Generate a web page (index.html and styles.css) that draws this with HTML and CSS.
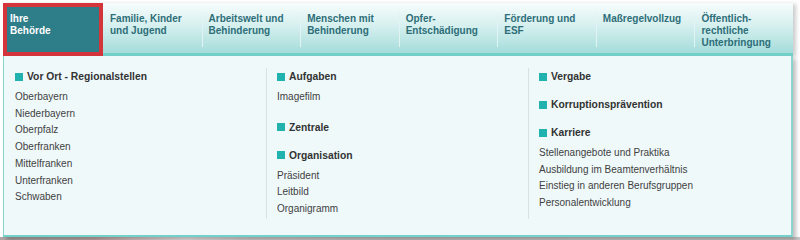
FILE: index.html
```html
<!DOCTYPE html>
<html lang="de">
<head>
    <meta charset="UTF-8">
    <meta name="viewport" content="width=device-width, initial-scale=1.0">
    <title>Ihre Behörde</title>
    <link rel="stylesheet" href="styles.css">
</head>
<body>

    <div class="menu">
        <nav class="topnav">
            <a class="nav-item active" href="#"><span class="nav-link">Ihre<br>Behörde</span></a>
            <a class="nav-item" href="#"><span class="nav-link">Familie, Kinder<br>und Jugend</span></a>
            <a class="nav-item" href="#"><span class="nav-link">Arbeitswelt und<br>Behinderung</span></a>
            <a class="nav-item" href="#"><span class="nav-link">Menschen mit<br>Behinderung</span></a>
            <a class="nav-item" href="#"><span class="nav-link">Opfer-<br>Entschädigung</span></a>
            <a class="nav-item" href="#"><span class="nav-link">Förderung und<br>ESF</span></a>
            <a class="nav-item" href="#"><span class="nav-link">Maßregelvollzug</span></a>
            <a class="nav-item" href="#"><span class="nav-link">Öffentlich-<br>rechtliche<br>Unterbringung</span></a>
        </nav>

        <div class="dropdown">
            <div class="column">
                <div class="group">
                    <h3 class="group-title">Vor Ort - Regionalstellen</h3>
                    <ul class="links">
                        <li><a href="#">Oberbayern</a></li>
                        <li><a href="#">Niederbayern</a></li>
                        <li><a href="#">Oberpfalz</a></li>
                        <li><a href="#">Oberfranken</a></li>
                        <li><a href="#">Mittelfranken</a></li>
                        <li><a href="#">Unterfranken</a></li>
                        <li><a href="#">Schwaben</a></li>
                    </ul>
                </div>
            </div>

            <div class="column">
                <div class="group">
                    <h3 class="group-title">Aufgaben</h3>
                    <ul class="links">
                        <li><a href="#">Imagefilm</a></li>
                    </ul>
                </div>
                <div class="group">
                    <h3 class="group-title">Zentrale</h3>
                </div>
                <div class="group">
                    <h3 class="group-title">Organisation</h3>
                    <ul class="links">
                        <li><a href="#">Präsident</a></li>
                        <li><a href="#">Leitbild</a></li>
                        <li><a href="#">Organigramm</a></li>
                    </ul>
                </div>
            </div>

            <div class="column">
                <div class="group">
                    <h3 class="group-title">Vergabe</h3>
                </div>
                <div class="group">
                    <h3 class="group-title">Korruptionsprävention</h3>
                </div>
                <div class="group">
                    <h3 class="group-title">Karriere</h3>
                    <ul class="links">
                        <li><a href="#">Stellenangebote und Praktika</a></li>
                        <li><a href="#">Ausbildung im Beamtenverhältnis</a></li>
                        <li><a href="#">Einstieg in anderen Berufsgruppen</a></li>
                        <li><a href="#">Personalentwicklung</a></li>
                    </ul>
                </div>
            </div>
        </div>
    </div>

    <div class="hero"></div>

</body>
</html>
```

FILE: styles.css
```css
body {
    margin: 0;
    background-color: #ffffff;
    font-family: "Liberation Sans", Arial, sans-serif;
    color: #333;
}

.menu {
    width: 790px;
    margin: 3px 0 0 3px;
    position: relative;
    z-index: 1;
}

/* Hauptnavigation */
.topnav {
    display: grid;
    grid-template-columns: 100px repeat(7, 1fr);
    height: 50px;
    background: linear-gradient(to bottom, #f7fcfc 0%, #d6f0ef 45%, #a4dcda 100%);
    border-bottom: 3px solid #74d1c9;
    box-shadow: 3px 1px 4px rgba(0, 0, 0, 0.2);
}

.nav-item {
    padding-top: 10px;
    text-decoration: none;
    color: #2d6e78;
    font-size: 10px;
    font-weight: bold;
    line-height: 12px;
}

.nav-link {
    display: block;
    height: 34px;
    padding-left: 6px;
    border-left: 1px solid #e2f3f3;
}

.nav-item:nth-child(2) .nav-link {
    border-left-color: transparent;
}

.nav-item.active {
    margin-bottom: -3px;
    padding-top: 6px;
    background-color: #2e7e89;
    border: 4px solid #d3353a;
    color: #ffffff;
}

.nav-item.active .nav-link {
    border-left: none;
    padding-left: 3px;
}

/* Dropdown */
.dropdown {
    display: grid;
    grid-template-columns: 262px 262px 1fr;
    padding: 12px 0 16px;
    background-color: #eff9fa;
    border-left: 1px solid #8ad6cf;
    border-right: 2px solid #8ad6cf;
    border-bottom: 2px solid #74d1c9;
    box-shadow: 3px 3px 4px rgba(0, 0, 0, 0.25);
}

.column {
    display: flex;
    flex-direction: column;
    gap: 14px;
    min-height: 148px;
    padding-top: 2px;
    padding-left: 10px;
    border-left: 1px solid #d5e3e4;
}

.column:first-child {
    padding-left: 11px;
    border-left: none;
}

.group-title {
    margin: 0;
    font-size: 10.3px;
    font-weight: bold;
    line-height: 14px;
    color: #333;
}

.group-title::before {
    content: "";
    display: inline-block;
    width: 8px;
    height: 8px;
    margin-right: 4px;
    vertical-align: -0.5px;
    background-color: #21b1af;
}

.links {
    list-style: none;
    margin: 5px 0 0;
    padding: 0 0 1px;
}

.links li {
    font-size: 10px;
    line-height: 16.7px;
}

.links a {
    color: #3f3f3f;
    text-decoration: none;
}

.links a:hover {
    text-decoration: underline;
}

/* Bild unter dem Menü */
.hero {
    height: 20px;
    background: linear-gradient(to right, #aca6a4 0, #b3aba9 60px, #c6a6a7 95px, #d9c2c2 130px, #ebe6e6 185px, #d4cfcf 250px, #c7c2c2 400px, #cdc9c9 600px, #c9c6c6 800px);
}
```
